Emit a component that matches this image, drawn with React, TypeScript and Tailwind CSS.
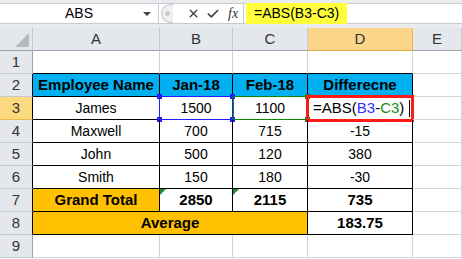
import React from "react";
import { X, Check } from "lucide-react";

const cols = ["A", "B", "C", "D", "E"];

const rows = [
  { name: "James", jan: "1500", feb: "1100" },
  { name: "Maxwell", jan: "700", feb: "715", diff: "-15" },
  { name: "John", jan: "500", feb: "120", diff: "380" },
  { name: "Smith", jan: "150", feb: "180", diff: "-30" },
];

const font = { fontFamily: '"Liberation Sans", Arial, sans-serif' };

const RowHead = ({ n, active, dark }: { n: number; active?: boolean; dark?: boolean }) => (
  <div
    className={`flex items-center justify-center border-b border-r text-[15px] text-[#333] ${
      active ? "bg-[#fad97f] border-b-[#e9b94e]" : "bg-[#e4e7ec] border-b-[#c5c9cf]"
    } ${dark ? "border-r-black" : "border-r-[#9ea4ad]"}`}
  >
    {n}
  </div>
);

const Cell = ({
  children,
  className = "",
}: {
  children?: React.ReactNode;
  className?: string;
}) => (
  <div
    className={`relative flex items-center justify-center border-b border-r text-[14px] text-black ${className}`}
  >
    {children}
  </div>
);

const Corner = ({ color, pos }: { color: string; pos: string }) => (
  <span className={`absolute h-[5px] w-[5px] ${color} ${pos}`} />
);

export default function App() {
  return (
    <div className="h-[259px] w-[462px] overflow-hidden bg-white" style={font}>
      {/* formula bar */}
      <div className="h-[28px] bg-[#e9ebee] pt-[3px]">
        <div className="flex h-[21px] border-y border-[#c8ccd2] bg-white">
          <div className="relative flex w-[158px] items-center justify-center text-[14px] text-black">
            ABS
            <span className="absolute right-[7px] top-[8px] h-0 w-0 border-x-[4px] border-t-[4px] border-x-transparent border-t-[#444]" />
          </div>
          <div className="flex w-[85px] items-center border-l border-[#c8ccd2] bg-white">
            <div className="ml-[2px] flex h-[19px] w-[12px] items-center justify-center rounded-l-full border border-r-0 border-[#c2c6cc] bg-[#eef0f2]">
              <span className="h-[5px] w-[5px] rounded-full bg-[#c9ccd0]" />
            </div>
            <X className="ml-[14px] h-[13px] w-[13px] text-[#444]" strokeWidth={2.5} />
            <Check className="ml-[6px] h-[14px] w-[14px] text-[#444]" strokeWidth={3} />
            <span
              className="ml-[8px] text-[14px] italic text-[#333]"
              style={{ fontFamily: '"Liberation Serif", serif' }}
            >
              fx
            </span>
          </div>
          <div className="flex flex-1 items-stretch border-l border-[#c8ccd2] pl-[2px]">
            <div className="-my-px flex items-center bg-[#ffff3c] px-[8px] text-[14px] text-black">
              =ABS(B3-C3)
            </div>
          </div>
        </div>
      </div>

      {/* sheet */}
      <div className="grid grid-cols-[33px_127px_73px_75px_105px_49px] auto-rows-[23px]">
        {/* column headers */}
        <div className="relative border-b border-r border-b-[#9ea4ad] border-r-[#c5c9cf] bg-[#e4e7ec]">
          <span className="absolute bottom-[3px] right-[3px] h-0 w-0 border-b-[14px] border-l-[14px] border-b-[#b5b9be] border-l-transparent" />
        </div>
        {cols.map((c) => (
          <div
            key={c}
            className={`flex items-center justify-center border-b border-r text-[15px] text-[#333] ${
              c === "D"
                ? "border-b-[#e9a83a] border-r-[#e9b94e] bg-[#fad58a]"
                : "border-b-[#9ea4ad] border-r-[#c5c9cf] bg-[#e4e7ec]"
            }`}
          >
            {c}
          </div>
        ))}

        {/* row 1 */}
        <RowHead n={1} />
        <Cell className="border-b-black border-r-[#d4d4d4]" />
        <Cell className="border-b-black border-r-[#d4d4d4]" />
        <Cell className="border-b-black border-r-[#d4d4d4]" />
        <Cell className="border-b-black border-r-[#d4d4d4]" />
        <Cell className="border-[#d4d4d4]" />

        {/* row 2 */}
        <RowHead n={2} dark />
        {["Employee Name", "Jan-18", "Feb-18", "Differecne"].map((h) => (
          <Cell key={h} className="border-black bg-[#00b0f0] text-[15px] font-bold">
            {h}
          </Cell>
        ))}
        <Cell className="border-[#d4d4d4]" />

        {/* rows 3-6 */}
        {rows.map((r, i) => (
          <React.Fragment key={r.name}>
            <RowHead n={i + 3} dark active={i === 0} />
            <Cell className="border-black">{r.name}</Cell>
            <Cell className="border-black">
              {r.jan}
              {i === 0 && (
                <>
                  <span className="absolute -left-px -top-px bottom-[-1px] right-[-1px] border border-[#1f1fff]" />
                  <Corner color="bg-[#1f1fff]" pos="-left-[3px] -top-[3px]" />
                  <Corner color="bg-[#1f1fff]" pos="-right-[3px] -top-[3px]" />
                  <Corner color="bg-[#1f1fff]" pos="-left-[3px] -bottom-[3px]" />
                  <Corner color="bg-[#1f1fff]" pos="-right-[3px] -bottom-[3px]" />
                </>
              )}
            </Cell>
            <Cell className="border-black">
              {r.feb}
              {i === 0 && (
                <>
                  <span className="absolute left-0 -top-px bottom-[-1px] right-[-1px] border border-[#0a8a0a]" />
                  <Corner color="bg-[#0a8a0a]" pos="-right-[3px] -top-[3px]" />
                  <Corner color="bg-[#0a8a0a]" pos="-right-[3px] -bottom-[3px]" />
                </>
              )}
            </Cell>
            {i === 0 ? (
              <Cell className="justify-start border-black pl-[5px]">
                <span className="text-[15px]">
                  =ABS(<span className="text-[#2f2fff]">B3</span>-
                  <span className="text-[#1a8a1a]">C3</span>)
                </span>
                <span className="ml-[5px] h-[17px] w-px bg-black" />
                <span className="absolute -left-[2px] -top-[2px] bottom-[-3px] right-[-2px] border-[3px] border-[#ff1a1a]" />
              </Cell>
            ) : (
              <Cell className="border-black">{r.diff}</Cell>
            )}
            <Cell className="border-[#d4d4d4]" />
          </React.Fragment>
        ))}

        {/* row 7 */}
        <RowHead n={7} dark />
        <Cell className="border-black bg-[#ffc000] text-[15px] font-bold">Grand Total</Cell>
        <Cell className="border-black text-[15px] font-bold">
          <span className="absolute left-0 top-0 h-0 w-0 border-r-[6px] border-t-[6px] border-r-transparent border-t-[#1e8a3a]" />
          2850
        </Cell>
        <Cell className="border-black text-[15px] font-bold">
          <span className="absolute left-0 top-0 h-0 w-0 border-r-[6px] border-t-[6px] border-r-transparent border-t-[#1e8a3a]" />
          2115
        </Cell>
        <Cell className="border-black text-[15px] font-bold">735</Cell>
        <Cell className="border-[#d4d4d4]" />

        {/* row 8 */}
        <RowHead n={8} dark />
        <Cell className="col-span-3 border-black bg-[#ffc000] text-[15px] font-bold">Average</Cell>
        <Cell className="border-black text-[15px] font-bold">183.75</Cell>
        <Cell className="border-[#d4d4d4]" />

        {/* row 9 */}
        <RowHead n={9} />
        {cols.map((c) => (
          <Cell key={c} className="border-[#d4d4d4]" />
        ))}
      </div>
    </div>
  );
}
